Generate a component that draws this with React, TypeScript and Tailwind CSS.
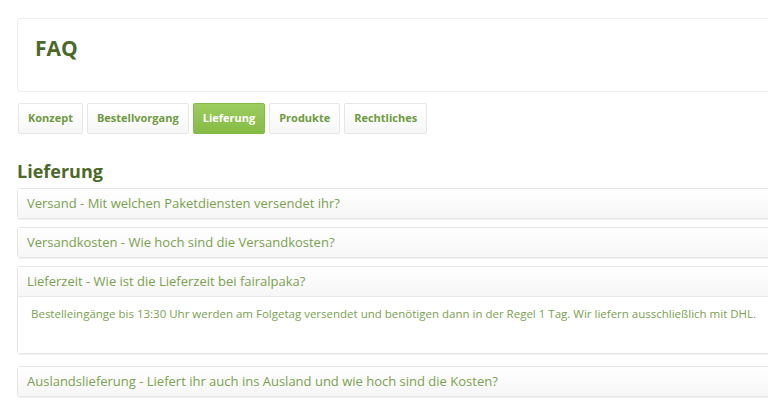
import React, { useState } from 'react';

const tabs = ['Konzept', 'Bestellvorgang', 'Lieferung', 'Produkte', 'Rechtliches'];

const questions = [
    { q: 'Versand - Mit welchen Paketdiensten versendet ihr?', a: '' },
    { q: 'Versandkosten - Wie hoch sind die Versandkosten?', a: '' },
    {
        q: 'Lieferzeit - Wie ist die Lieferzeit bei fairalpaka?',
        a: 'Bestelleingänge bis 13:30 Uhr werden am Folgetag versendet und benötigen dann in der Regel 1 Tag. Wir liefern ausschließlich mit DHL.',
    },
    { q: 'Auslandslieferung - Liefert ihr auch ins Ausland und wie hoch sind die Kosten?', a: '' },
];

export default function App() {
    const [active, setActive] = useState('Lieferung');
    const [open, setOpen] = useState(2);

    return (
        <div className="w-[768px] h-[416px] overflow-hidden bg-white" style={{ fontFamily: '"Open Sans", "Liberation Sans", sans-serif' }}>
            <div className="w-[800px] pl-[17px] pt-[18px]">
                <div className="h-[74px] border border-[#ececec] rounded-[3px] pl-[17px] pt-[14px]">
                    <h1 className="text-[21px] font-bold text-[#4c6a27] leading-[30px]">FAQ</h1>
                </div>

                <div className="flex gap-[4px] mt-[11px] pl-px">
                    {tabs.map(t => (
                        <button
                            key={t}
                            onClick={() => setActive(t)}
                            className={`h-[31px] px-[9px] rounded-[2px] text-[11px] font-bold ${
                                t === active
                                    ? 'bg-gradient-to-b from-[#9ccd5e] to-[#85bb45] text-white border border-[#85bb45]'
                                    : 'bg-gradient-to-b from-white to-[#f7f7f7] text-[#6f9a40] border border-[#e6e6e6]'
                            }`}
                        >
                            {t}
                        </button>
                    ))}
                </div>

                <h2 className="mt-[25px] text-[18px] font-bold text-[#4c6a27] leading-[24px]">Lieferung</h2>

                <div className="mt-[5px] flex flex-col gap-[8px]">
                    {questions.map((item, i) => (
                        <div
                            key={i}
                            className={`border border-[#e6e6e6] rounded-[3px] shadow-[0_1px_1px_rgba(0,0,0,0.06)] ${i === 3 ? 'mt-[4px]' : ''}`}
                        >
                            <div
                                onClick={() => setOpen(open === i ? -1 : i)}
                                className="h-[29px] flex items-center pl-[9px] bg-gradient-to-b from-white to-[#f6f6f6] text-[13px] text-[#7aa150] cursor-pointer"
                            >
                                {item.q}
                            </div>
                            {open === i && item.a && (
                                <div className="h-[57px] border-t border-[#e8e8e8] pl-[13px] pt-[8px] text-[11.5px] text-[#7aa150] bg-white">
                                    {item.a}
                                </div>
                            )}
                        </div>
                    ))}
                </div>
            </div>
        </div>
    );
}
